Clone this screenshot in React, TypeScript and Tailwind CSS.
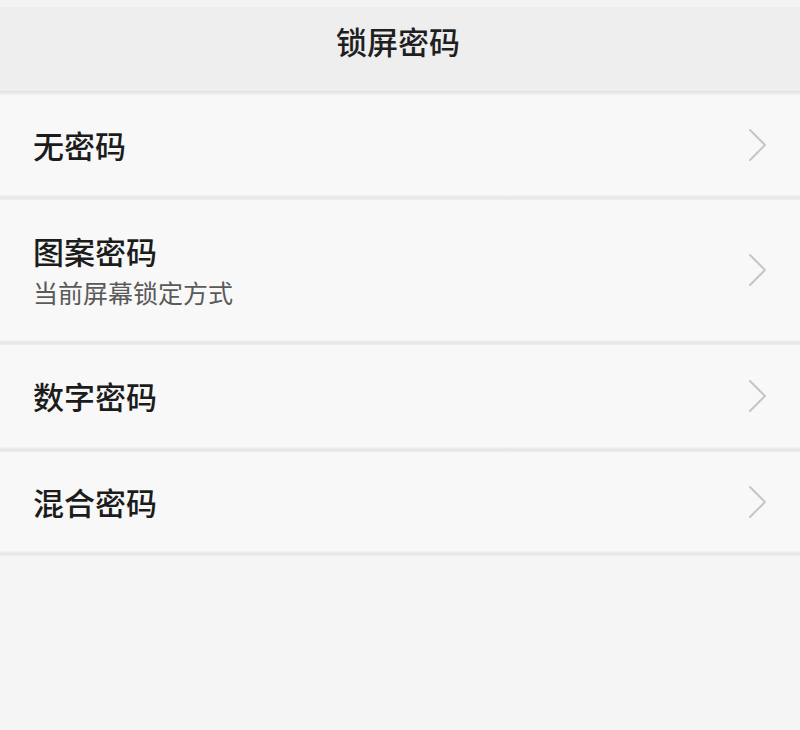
type Item = { title: string; sub?: string; h: string }

const items: Item[] = [
  { title: '无密码', h: 'h-[100px]' },
  { title: '图案密码', sub: '当前屏幕锁定方式', h: 'h-[140px]' },
  { title: '数字密码', h: 'h-[102px]' },
  { title: '混合密码', h: 'h-[99px]' },
]

function Divider() {
  return <div className="h-[5px] bg-gradient-to-b from-[#f4f4f4] via-[#e6e6e6] to-[#eeeeee]" />
}

function Chevron() {
  return (
    <svg width="22" height="34" viewBox="0 0 22 34" fill="none" className="text-[#c6c6c6]">
      <path d="M3 2 L18 17 L3 32" stroke="currentColor" strokeWidth="2" strokeLinecap="round" strokeLinejoin="round" />
    </svg>
  )
}

export default function App() {
  return (
    <div
      className="w-[800px] h-[730px] bg-[#f5f5f5] flex flex-col overflow-hidden"
      style={{ fontFamily: '"Noto Sans CJK SC", "Noto Sans", sans-serif' }}
    >
      <div className="h-[7px] bg-[#f4f4f4]" />

      {/* Header */}
      <header className="h-[84px] bg-[#eeeeee] flex items-center justify-center pb-[16px]">
        <h1 className="text-[31px] font-medium text-[#1f1f1f] pr-[4px]">锁屏密码</h1>
      </header>
      <div className="h-[4px] bg-gradient-to-b from-[#e2e2e2] to-[#f2f2f2]" />

      {/* Options */}
      {items.map((item, i) => (
        <div key={item.title}>
          {i > 0 && <Divider />}
          <div className={`${item.h} bg-[#f8f8f8] flex items-center justify-between pl-[33px] pr-[31px]`}>
            <div className="flex flex-col">
              <span className="text-[31px] leading-[40px] font-medium text-[#1c1c1c]">{item.title}</span>
              {item.sub && (
                <span className="text-[25px] leading-[34px] text-[#5a5a5a] mt-[4px]">{item.sub}</span>
              )}
            </div>
            <Chevron />
          </div>
        </div>
      ))}
      <Divider />
    </div>
  )
}
